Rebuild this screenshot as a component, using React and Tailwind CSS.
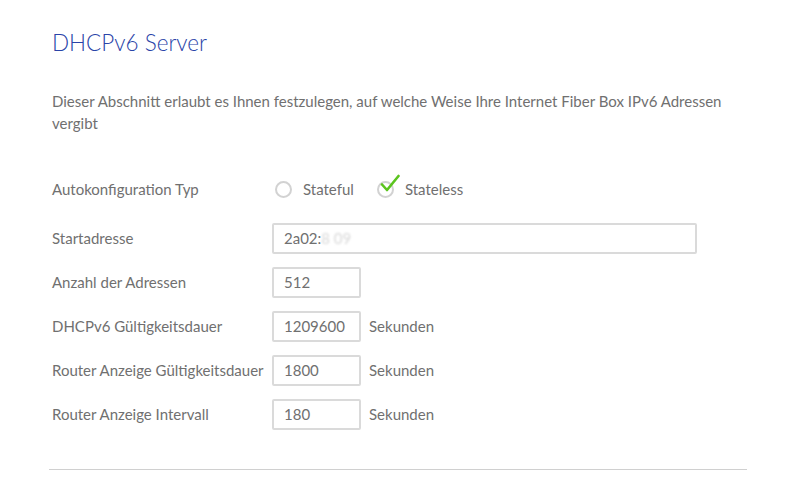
const FIELDS = [
  { label: 'Anzahl der Adressen', value: '512' },
  { label: 'DHCPv6 Gültigkeitsdauer', value: '1209600', unit: 'Sekunden' },
  { label: 'Router Anzeige Gültigkeitsdauer', value: '1800', unit: 'Sekunden' },
  { label: 'Router Anzeige Intervall', value: '180', unit: 'Sekunden' },
];

function Radio({ label, checked }) {
  return (
    <label className="flex items-center gap-[11px]">
      <span className="relative block h-[17px] w-[17px] rounded-full border-2 border-[#d2d2d2]">
        {checked && (
          <svg className="absolute left-[1px] top-[-9px] h-[20px] w-[20px]" viewBox="0 0 20 20">
            <path d="M2 10.5 L7 16 L18.5 2" fill="none" stroke="#5bc41e" strokeWidth="2.6" strokeLinecap="round" strokeLinejoin="round" />
          </svg>
        )}
      </span>
      <span>{label}</span>
    </label>
  );
}

export default function App() {
  return (
    <div className="min-h-[489px] w-full bg-white" style={{ fontFamily: "'Lato', 'Open Sans', sans-serif" }}>
      <div className="ml-[49px] w-[698px] pt-[28px]">
        <div className="pl-[3px]">
          <h1 className="text-[22.5px] font-light leading-[30px] text-[#2a44a8]">DHCPv6 Server</h1>
          <p className="mt-[32px] text-[15px] leading-[22px] text-[#707070]">
            Dieser Abschnitt erlaubt es Ihnen festzulegen, auf welche Weise Ihre Internet Fiber Box IPv6 Adressen vergibt
          </p>

          <div className="mt-[33px] flex h-[44px] items-center text-[15px] text-[#707070]">
            <div className="w-[220px]">Autokonfiguration Typ</div>
            <div className="flex items-center gap-[23px] pl-[3px]">
              <Radio label="Stateful" />
              <Radio label="Stateless" checked />
            </div>
          </div>

          <div className="mt-[5px] flex h-[44px] items-center text-[15px] text-[#707070]">
            <div className="w-[220px]">Startadresse</div>
            <div className="flex h-[31px] w-[425px] items-center rounded-[2px] border-2 border-[#dadada] px-[10px]">
              <span>2a02:</span>
              <span className="text-[#d8d8d8] blur-[1px]">8 09</span>
            </div>
          </div>

          {FIELDS.map((f) => (
            <div key={f.label} className="flex h-[44px] items-center text-[15px] text-[#707070]">
              <div className="w-[220px]">{f.label}</div>
              <div className="flex h-[31px] w-[89px] items-center rounded-[2px] border-2 border-[#dadada] px-[10px]">
                {f.value}
              </div>
              {f.unit && <span className="ml-[8px]">{f.unit}</span>}
            </div>
          ))}
        </div>

        <div className="mt-[33px] h-px bg-[#d0d0d0]" />
      </div>
    </div>
  );
}
